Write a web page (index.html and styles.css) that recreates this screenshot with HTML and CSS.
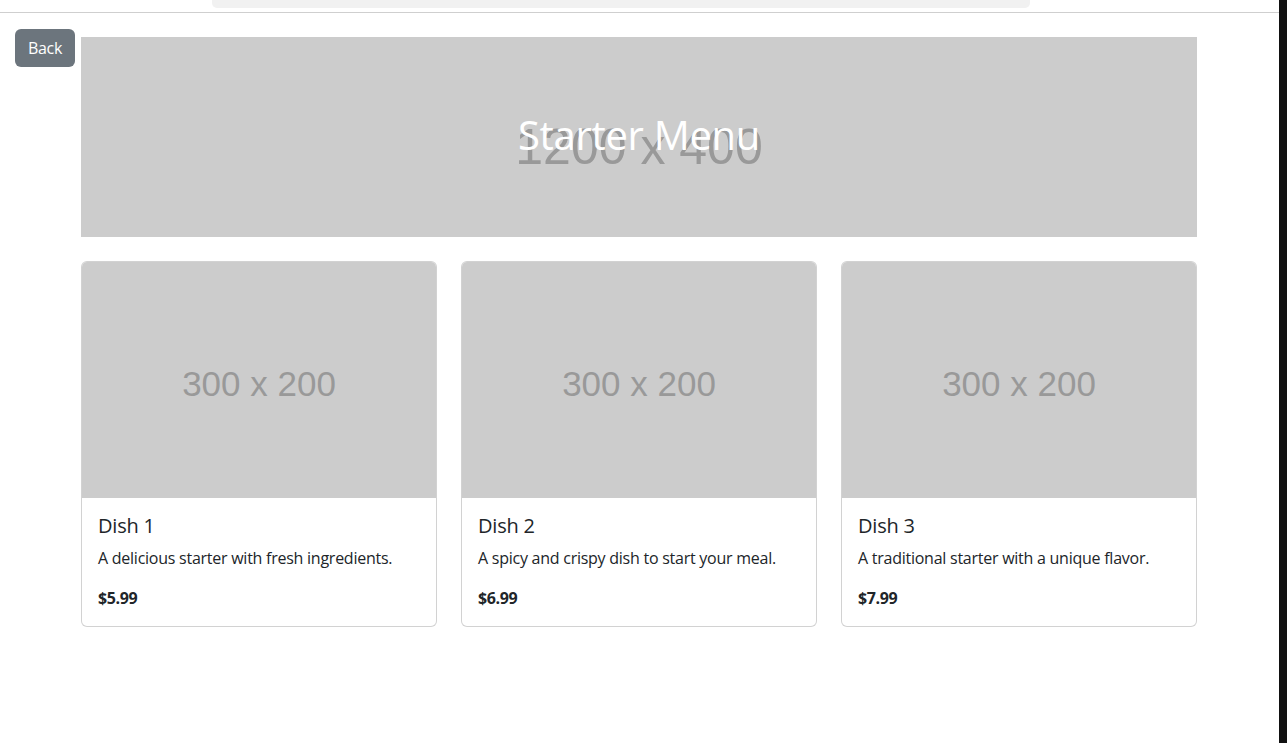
FILE: index.html
```html
<!DOCTYPE html>
<html lang="en">
<head>
<meta charset="utf-8">
<title>Starter Menu</title>
<link rel="stylesheet" href="styles.css">
</head>
<body>
<div class="shell">
  <div class="page">
    <div class="topbar"><div class="topbar-pill"></div></div>
    <a class="btn-back" href="#">Back</a>
    <main class="container">
      <section class="banner">
        <span class="ph-text ph-text-lg">1200 x 400</span>
        <h1 class="banner-title">Starter Menu</h1>
      </section>
      <div class="cards">
        <article class="card">
          <div class="card-img"><span class="ph-text">300 x 200</span></div>
          <div class="card-body">
            <h5 class="card-title">Dish 1</h5>
            <p class="card-text">A delicious starter with fresh ingredients.</p>
            <p class="card-text price">$5.99</p>
          </div>
        </article>
        <article class="card">
          <div class="card-img"><span class="ph-text">300 x 200</span></div>
          <div class="card-body">
            <h5 class="card-title">Dish 2</h5>
            <p class="card-text">A spicy and crispy dish to start your meal.</p>
            <p class="card-text price">$6.99</p>
          </div>
        </article>
        <article class="card">
          <div class="card-img"><span class="ph-text">300 x 200</span></div>
          <div class="card-body">
            <h5 class="card-title">Dish 3</h5>
            <p class="card-text">A traditional starter with a unique flavor.</p>
            <p class="card-text price">$7.99</p>
          </div>
        </article>
      </div>
    </main>
  </div>
  <div class="edge"></div>
</div>
</body>
</html>
```

FILE: styles.css
```css
* { box-sizing: border-box; }
html, body { margin: 0; padding: 0; height: 100%; }
body {
  font-family: "Open Sans", "Noto Sans", sans-serif;
  font-size: 16px;
  line-height: 1.5;
  color: #212529;
  background: #fff;
  overflow: hidden;
}
.shell {
  display: flex;
  height: 743px;
}
.page {
  position: relative;
  flex: 1;
  min-width: 0;
}
.edge {
  width: 8px;
  background: #111;
}
.topbar {
  height: 13px;
  border-bottom: 1px solid #cfcfcf;
  display: flex;
  padding-left: 212px;
}
.topbar-pill {
  width: 818px;
  height: 8px;
  background: #f1f1f1;
  border-radius: 0 0 5px 5px;
}
.btn-back {
  position: absolute;
  top: 29px;
  left: 15px;
  width: 60px;
  height: 38px;
  display: flex;
  align-items: center;
  justify-content: center;
  background: #6c757d;
  color: #fff;
  border-radius: 6px;
  text-decoration: none;
  font-size: 16px;
  letter-spacing: -0.3px;
}
.container {
  width: 1116px;
  margin: 24px auto 0 81px;
}
.banner {
  position: relative;
  height: 200px;
  background: #ccc;
  display: flex;
  align-items: center;
  justify-content: center;
  overflow: hidden;
}
.ph-text {
  font-family: "Liberation Sans", Arial, sans-serif;
  color: #999;
  font-size: 35px;
  line-height: 1;
}
.ph-text-lg {
  font-size: 50px;
  position: absolute;
  left: 0;
  right: 0;
  top: 85px;
  text-align: center;
}
.banner-title {
  position: relative;
  margin: 0 0 4px;
  font-size: 40px;
  font-weight: 500;
  line-height: 1.2;
  color: #fff;
  letter-spacing: -0.3px;
}
.cards {
  display: grid;
  grid-template-columns: repeat(3, 1fr);
  gap: 24px;
  margin-top: 24px;
}
.card {
  border: 1px solid rgba(0,0,0,.175);
  border-radius: 6px;
  overflow: hidden;
  background: #fff;
}
.card-img {
  height: 236px;
  background: #ccc;
  display: flex;
  align-items: center;
  justify-content: center;
  padding-top: 6px;
}
.card-body {
  padding: 16px;
}
.card-title {
  margin: 0 0 8px;
  font-size: 20px;
  font-weight: 500;
  line-height: 1.2;
  letter-spacing: -0.2px;
}
.card-text {
  margin: 0 0 16px;
  font-size: 16px;
  line-height: 24px;
  letter-spacing: -0.25px;
}
.card-text:last-child { margin-bottom: 0; }
.price { font-weight: 700; letter-spacing: -0.4px; }
```
